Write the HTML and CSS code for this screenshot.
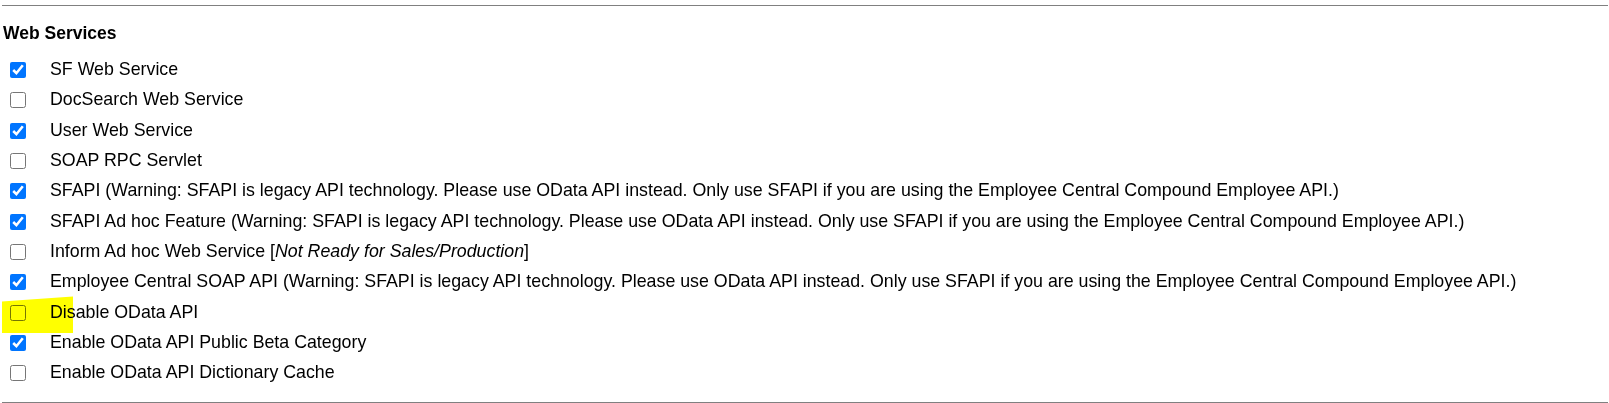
FILE: index.html
```html
<!DOCTYPE html>
<html lang="en">
<head>
    <meta charset="UTF-8">
    <title>Web Services</title>
    <link rel="stylesheet" href="styles.css">
</head>
<body>
    <div class="rule"></div>
    <h3 class="section-title">Web Services</h3>
    <ul class="option-list">
        <li class="option"><input type="checkbox" checked><span>SF Web Service</span></li>
        <li class="option"><input type="checkbox"><span>DocSearch Web Service</span></li>
        <li class="option"><input type="checkbox" checked><span>User Web Service</span></li>
        <li class="option"><input type="checkbox"><span>SOAP RPC Servlet</span></li>
        <li class="option"><input type="checkbox" checked><span>SFAPI (Warning: SFAPI is legacy API technology. Please use OData API instead. Only use SFAPI if you are using the Employee Central Compound Employee API.)</span></li>
        <li class="option"><input type="checkbox" checked><span>SFAPI Ad hoc Feature (Warning: SFAPI is legacy API technology. Please use OData API instead. Only use SFAPI if you are using the Employee Central Compound Employee API.)</span></li>
        <li class="option"><input type="checkbox"><span>Inform Ad hoc Web Service [<i>Not Ready for Sales/Production</i>]</span></li>
        <li class="option"><input type="checkbox" checked><span>Employee Central SOAP API (Warning: SFAPI is legacy API technology. Please use OData API instead. Only use SFAPI if you are using the Employee Central Compound Employee API.)</span></li>
        <li class="option"><input type="checkbox"><span>Disable OData API</span><div class="marker"></div></li>
        <li class="option"><input type="checkbox" checked><span>Enable OData API Public Beta Category</span></li>
        <li class="option"><input type="checkbox"><span>Enable OData API Dictionary Cache</span></li>
    </ul>
    <div class="rule bottom"></div>
</body>
</html>
```

FILE: styles.css
```css
body {
    margin: 0;
    font-family: "Liberation Sans", Arial, sans-serif;
    font-size: 17.5px;
    color: #000;
    background: #fff;
}

.rule {
    height: 1px;
    background-color: #808080;
    margin: 5px 1px 0 2px;
}

.rule.bottom {
    margin-top: 14.6px;
}

.section-title {
    font-size: 17.5px;
    font-weight: bold;
    line-height: 20px;
    margin: 17.3px 0 0 3px;
}

.option-list {
    list-style-type: none;
    margin: 10.5px 0 0 0;
    padding: 0;
}

.option {
    position: relative;
    display: flex;
    align-items: center;
    height: 30.33px;
    font-size: 17.8px;
    line-height: 20px;
    white-space: nowrap;
}

.option input {
    width: 16px;
    height: 16px;
    margin: 2px 24px 0 10px;
}

/* yellow highlighter stroke */
.marker {
    position: absolute;
    left: 2px;
    top: 0;
    width: 71px;
    height: 36.5px;
    background-color: #ffff00;
    mix-blend-mode: multiply;
    clip-path: polygon(0 5px, 28px 3px, 71px 0, 71px 100%, 0 100%);
}
```
